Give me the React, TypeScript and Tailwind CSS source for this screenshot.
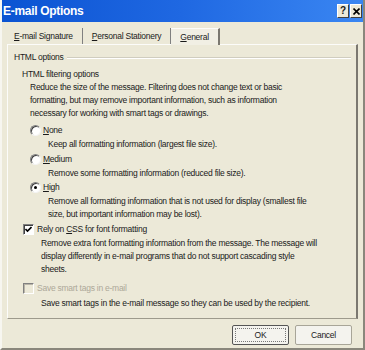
import { useState } from "react"

function Radio({ checked }: { checked?: boolean }) {
  return (
    <span className="relative inline-block w-[11px] h-[11px] rounded-full bg-white border border-t-[#808080] border-l-[#808080] border-b-[#f4f4f4] border-r-[#f4f4f4] shadow-[inset_1px_1px_0_#404040]">
      {checked && (
        <span className="absolute left-[3px] top-[3px] w-[3px] h-[3px] rounded-full bg-black" />
      )}
    </span>
  )
}

function Check({ checked, disabled }: { checked?: boolean; disabled?: boolean }) {
  return (
    <span
      className={
        "inline-flex items-center justify-center w-[11px] h-[11px] border border-t-[#808080] border-l-[#808080] border-b-white border-r-white " +
        (disabled ? "bg-[#ece9d8] shadow-[inset_1px_1px_0_#b8b4a8]" : "bg-white shadow-[inset_1px_1px_0_#404040]")
      }
    >
      {checked && (
        <svg width="7" height="7" viewBox="0 0 7 7">
          <path d="M0.5 3 L2.5 5 L6.5 1" stroke="#000" strokeWidth="1.6" fill="none" />
        </svg>
      )}
    </span>
  )
}

export default function App() {
  const [level] = useState("high")

  const options = [
    { key: "none", u: "N", rest: "one", desc: ["Keep all formatting information (largest file size)."], mt: "mt-[4px]" },
    { key: "medium", u: "M", rest: "edium", desc: ["Remove some formatting information (reduced file size)."], mt: "mt-[2px]" },
    {
      key: "high",
      u: "H",
      rest: "igh",
      desc: [
        "Remove all formatting information that is not used for display (smallest file",
        "size, but important information may be lost).",
      ],
      mt: "mt-[1px]",
    },
  ]

  return (
    <div
      className="w-[365px] h-[350px] bg-[#ece9d8] text-[8.5px] leading-[13px] text-[#1a1a1a] overflow-hidden border-l-2 border-l-[#f7f6f0] border-r-2 border-r-[#8a877c] border-b-2 border-b-[#8a877c] flex flex-col"
      style={{ fontFamily: '"Liberation Sans", Arial, sans-serif' }}
    >
      {/* title bar */}
      <div className="h-[22px] shrink-0 -ml-[2px] bg-gradient-to-r from-[#0a53d2] via-[#1f68e2] to-[#3a86f2] flex items-center justify-between pl-[3px] pr-[1px]">
        <span className="text-white font-bold text-[12px] tracking-[-0.3px]">E-mail Options</span>
        <div className="flex gap-[1px]">
          <span className="w-[12px] h-[14px] bg-[#ece9d8] border border-t-white border-l-white border-b-[#404040] border-r-[#404040] flex items-center justify-center text-[10px] font-bold leading-none">
            ?
          </span>
          <span className="w-[12px] h-[14px] bg-[#ece9d8] border border-t-white border-l-white border-b-[#404040] border-r-[#404040] flex items-center justify-center">
            <svg width="7" height="7" viewBox="0 0 7 7">
              <path d="M0.5 0.5 L6.5 6.5 M6.5 0.5 L0.5 6.5" stroke="#000" strokeWidth="1.6" />
            </svg>
          </span>
        </div>
      </div>

      <div className="flex-1 flex flex-col px-[5px] pt-[6px] tracking-[-0.25px]">
        {/* tabs */}
        <div className="flex h-[16px] items-end">
          <div className="pl-[7px] pr-[9px] h-[16px] flex items-center border-r border-r-[#808080]">
            <span><u>E</u>-mail Signature</span>
          </div>
          <div className="px-[9px] h-[16px] flex items-center border-r border-r-[#808080]">
            <span><u>P</u>ersonal Stationery</span>
          </div>
          <div className="relative px-[9px] h-[17px] flex items-center bg-[#f1efe4] border-t border-t-[#fcfcfa] border-r-2 border-r-[#7b7870] -mb-px z-10">
            <span><u>G</u>eneral</span>
          </div>
        </div>

        {/* panel */}
        <div className="h-[275px] border border-t-[#fcfcfa] border-l-[#fcfcfa] border-b-[#9d9a8c] border-r-2 border-r-[#7b7870] bg-[#ece9d8] pl-[6px] pr-[5px] pt-[6px]">
          <div className="flex items-center gap-[3px]">
            <span>HTML options</span>
            <div className="flex-1 border-t border-t-[#d0cdbf] border-b border-b-white" />
          </div>

          <div className="mt-[4px] pl-[8px]">HTML filtering options</div>

          <div className="pl-[16px]">
            <div>Reduce the size of the message. Filtering does not change text or basic</div>
            <div>formatting, but may remove important information, such as information</div>
            <div>necessary for working with smart tags or drawings.</div>

            {options.map((o) => (
              <div key={o.key} className={o.mt}>
                <div className="flex items-center gap-[2px]">
                  <Radio checked={level === o.key} />
                  <span>
                    <u>{o.u}</u>
                    {o.rest}
                  </span>
                </div>
                <div className="pl-[18px] mt-[1px]">
                  {o.desc.map((d) => (
                    <div key={d}>{d}</div>
                  ))}
                </div>
              </div>
            ))}
          </div>

          <div className="mt-[2px] pl-[9px] flex items-center gap-[3px]">
            <Check checked />
            <span>
              Rely on <u>C</u>SS for font formatting
            </span>
          </div>
          <div className="mt-[1px] pl-[27px]">
            <div>Remove extra font formatting information from the message. The message will</div>
            <div>display differently in e-mail programs that do not support cascading style</div>
            <div>sheets.</div>
          </div>

          <div className="mt-[6px] pl-[9px] flex items-center gap-[3px] text-[#aca899]">
            <Check disabled />
            <span>Save smart tags in e-mail</span>
          </div>
          <div className="mt-[2px] pl-[27px]">
            Save smart tags in the e-mail message so they can be used by the recipient.
          </div>
        </div>

        {/* buttons */}
        <div className="flex justify-end gap-[6px] mt-[6px] pr-[6px]">
          <button className="w-[57px] h-[20px] bg-[#f4f3ee] border border-[#555] rounded-[2px] flex items-center justify-center font-normal">
            <span className="border border-dotted border-[#777] w-[51px] h-[14px] flex items-center justify-center leading-none">
              OK
            </span>
          </button>
          <button className="w-[57px] h-[20px] bg-[#f4f3ee] border border-[#a8a598] rounded-[2px] flex items-center justify-center leading-none font-normal">
            Cancel
          </button>
        </div>
      </div>
    </div>
  )
}
